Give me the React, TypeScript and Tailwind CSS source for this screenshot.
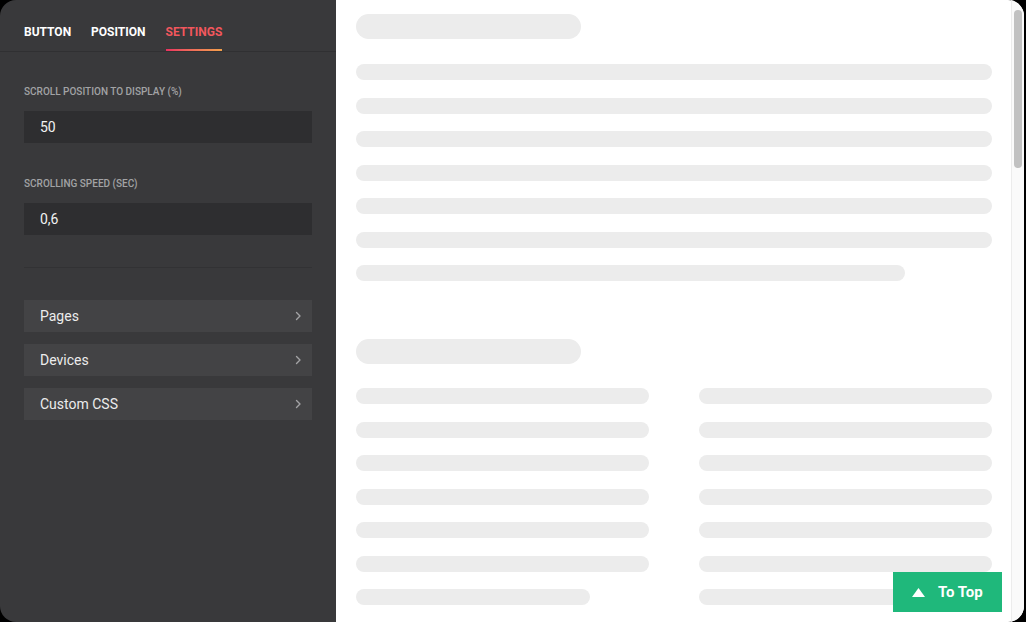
import React from 'react';

const lineRows = [636, 636, 636, 636, 636, 636, 549];

function Chevron() {
  return (
    <svg width="8" height="10" viewBox="0 0 8 10" fill="none">
      <path d="M2.5 1.5L6 5L2.5 8.5" stroke="#a3a3a5" strokeWidth="1.4" strokeLinecap="round" strokeLinejoin="round" />
    </svg>
  );
}

function Field({ label, value }: { label: string; value: string }) {
  return (
    <div className="flex flex-col">
      <div className="text-[10px] font-medium uppercase text-[#a2a3a5] leading-[12px] h-[12px]">{label}</div>
      <div className="mt-[13px] h-[32px] bg-[#2e2e30] flex items-center px-4 text-[14px] text-[#f2f2f2]">
        {value}
      </div>
    </div>
  );
}

function MenuRow({ label }: { label: string }) {
  return (
    <div className="h-[32px] bg-[#434345] flex items-center justify-between pl-4 pr-[10px] text-[14px] text-[#ececec]">
      <span>{label}</span>
      <Chevron />
    </div>
  );
}

export default function App() {
  return (
    <div className="w-[1026px] h-[622px] bg-black" style={{ fontFamily: 'Roboto, "Noto Sans", sans-serif' }}>
      <div className="w-[1024px] h-[622px] rounded-[16px] overflow-hidden flex">
        {/* settings panel */}
        <div className="w-[336px] shrink-0 bg-[#39393b] flex flex-col">
          <div className="h-[52px] border-b border-[#303032] flex items-end gap-5 px-6">
            <div className="h-full flex items-center pt-[12px] text-[12px] font-bold text-white">BUTTON</div>
            <div className="h-full flex items-center pt-[12px] text-[12px] font-bold text-white">POSITION</div>
            <div className="h-full flex flex-col justify-end">
              <div className="flex-1 flex items-center pt-[14px] text-[12px] font-bold text-[#f2575d]">SETTINGS</div>
              <div className="h-[2px] bg-gradient-to-r from-[#e9305f] to-[#f3a04a]" />
            </div>
          </div>
          <div className="px-6 pt-[34px] flex flex-col">
            <Field label="Scroll position to display (%)" value="50" />
            <div className="h-[35px]" />
            <Field label="Scrolling speed (sec)" value="0,6" />
            <div className="mt-[32px] h-px bg-[#323234]" />
            <div className="mt-[32px] flex flex-col gap-3">
              <MenuRow label="Pages" />
              <MenuRow label="Devices" />
              <MenuRow label="Custom CSS" />
            </div>
          </div>
        </div>

        {/* preview */}
        <div className="flex-1 bg-white relative flex">
          <div className="flex-1 pl-5 pr-[19px] pt-[14px] flex flex-col">
            <div className="w-[225px] h-[25px] rounded-full bg-[#ececec]" />
            <div className="mt-[25px] flex flex-col gap-[17.5px]">
              {lineRows.map((w, i) => (
                <div key={i} className="h-4 rounded-full bg-[#ececec]" style={{ width: w }} />
              ))}
            </div>
            <div className="mt-[58px] w-[225px] h-[25px] rounded-full bg-[#ececec]" />
            <div className="mt-[24px] grid grid-cols-2 gap-x-[50px]">
              <div className="flex flex-col gap-[17.5px]">
                {[293, 293, 293, 293, 293, 293, 234].map((w, i) => (
                  <div key={i} className="h-4 rounded-full bg-[#ececec]" style={{ width: w }} />
                ))}
              </div>
              <div className="flex flex-col gap-[17.5px]">
                {[0, 1, 2, 3, 4, 5, 6].map((i) => (
                  <div key={i} className="h-4 rounded-full bg-[#ececec] w-full" />
                ))}
              </div>
            </div>
          </div>

          {/* scrollbar */}
          <div className="w-[13px] shrink-0 border-l border-[#ececec] bg-[#fafafa] pt-[10px] pl-[2px]">
            <div className="w-[8px] h-[158px] rounded-full bg-[#c1c1c1]" />
          </div>

          <button className="absolute right-[22px] bottom-[10px] w-[109px] h-[40px] bg-[#1fb87b] flex items-center gap-[13px] pl-[19px] text-white text-[15px] font-bold">
            <svg width="13" height="9" viewBox="0 0 13 9">
              <path d="M6.5 0L13 9H0Z" fill="#ffffff" />
            </svg>
            <span>To Top</span>
          </button>
        </div>
      </div>
    </div>
  );
}
